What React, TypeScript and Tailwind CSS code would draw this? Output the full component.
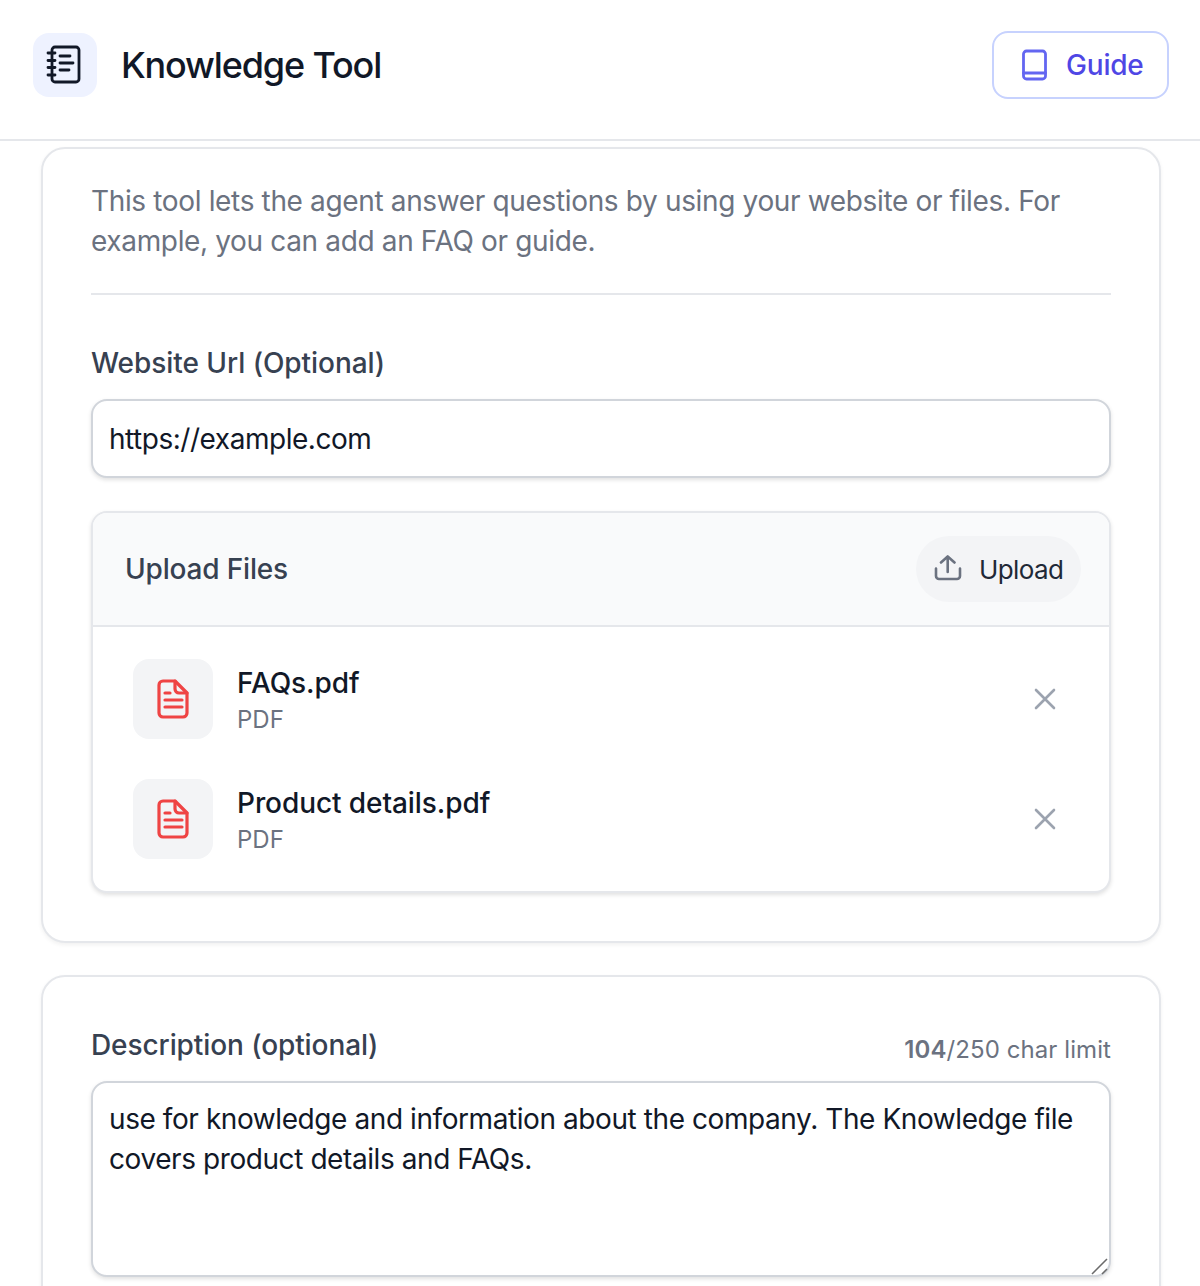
import React from "react";

function NotebookIcon() {
  return (
    <svg width="40" height="40" viewBox="0 0 40 40" fill="none" stroke="#111827" strokeWidth="2.8" strokeLinecap="round" strokeLinejoin="round">
      <rect x="7" y="2" width="27" height="35" rx="3" />
      <path d="M3 8h7M3 15.5h7M3 22.5h7M3 30h7" />
      <path d="M15 11h10M15 18h13M15 25h9" />
    </svg>
  );
}

function BookIcon() {
  return (
    <svg width="32" height="36" viewBox="0 0 32 36" fill="none" stroke="#6366f1" strokeWidth="2.8" strokeLinecap="round" strokeLinejoin="round">
      <rect x="4.5" y="4" width="22" height="28" rx="3" />
      <path d="M4.5 26h22" />
    </svg>
  );
}

function FileIcon() {
  return (
    <svg width="36" height="42" viewBox="0 0 36 42" fill="none" stroke="#ef4444" strokeWidth="3.2" strokeLinecap="round" strokeLinejoin="round">
      <path d="M20 3H8a4 4 0 0 0-4 4v28a4 4 0 0 0 4 4h20a4 4 0 0 0 4-4V15L20 3Z" />
      <path d="M20 3v8a4 4 0 0 0 4 4h8" />
      <path d="M10 15h5M10 22h17M10 29h17" />
    </svg>
  );
}

function UploadIcon() {
  return (
    <svg width="28" height="28" viewBox="0 0 28 28" fill="none" stroke="#6b7280" strokeWidth="2.6" strokeLinecap="round" strokeLinejoin="round">
      <path d="M13.7 1.5V17M7 7.5l6.7-6L20.5 7.5" />
      <path d="M2 13.5V21a3 3 0 0 0 3 3h18a3 3 0 0 0 3-3v-7.5" />
    </svg>
  );
}

function CloseIcon() {
  return (
    <svg width="24" height="24" viewBox="0 0 24 24" fill="none" stroke="#9ca3af" strokeWidth="2.6" strokeLinecap="round">
      <path d="M3 3l18 18M21 3L3 21" />
    </svg>
  );
}

function FileRow({ name }: { name: string }) {
  return (
    <div className="flex h-[80px] items-center">
      <div className="flex h-[80px] w-[80px] items-center justify-center rounded-[16px] bg-[#f3f4f6]">
        <FileIcon />
      </div>
      <div className="ml-[24px] flex-1">
        <div className="text-[28px] leading-[40px] font-medium tracking-[-0.08px] text-[#111827]">{name}</div>
        <div className="mt-[1px] text-[24px] leading-[32px] text-[#6b7280]">PDF</div>
      </div>
      <div className="mr-[4px] flex h-[40px] w-[40px] items-center justify-center">
        <CloseIcon />
      </div>
    </div>
  );
}

export default function App() {
  return (
    <div className="h-[1286px] w-[1200px] overflow-hidden bg-white font-['Inter',sans-serif]">
      <header className="flex h-[141px] items-center justify-between border-b-2 border-[#e5e7eb] pr-[31px] pb-[9px] pl-[33px]">
        <div className="flex items-center gap-[24px]">
          <div className="flex h-[64px] w-[64px] items-center justify-center rounded-[16px] bg-[#eef2ff]">
            <NotebookIcon />
          </div>
          <h1 className="text-[36px] leading-[40px] font-medium tracking-[-1.15px] text-[#111827]">Knowledge Tool</h1>
        </div>
        <button className="flex h-[68px] w-[177px] items-center justify-start gap-[15px] rounded-[16px] border-2 border-[#c7d2fe] bg-white pl-[25px] text-[28px] font-medium tracking-[-0.2px] text-[#4f46e5]">
          <BookIcon />
          Guide
        </button>
      </header>

      <main className="mt-[6px] flex flex-col gap-[32px] pr-[39px] pl-[41px]">
        <section className="rounded-[24px] border-2 border-[#e5e7eb] bg-white px-[48px] pt-[32px] pb-[48px] shadow-[0_2px_4px_rgba(0,0,0,0.06)]">
          <p className="border-b-2 border-[#e5e7eb] pb-[32px] text-[28px] leading-[40px] tracking-[-0.35px] text-[#6b7280]">
            This tool lets the agent answer questions by using your website or files. For example, you can add an FAQ or guide.
          </p>

          <label className="mt-[48px] block text-[28px] leading-[40px] font-medium tracking-[-0.05px] text-[#374151]">Website Url (Optional)</label>
          <input
            readOnly
            value="https://example.com"
            className="mt-[16px] block h-[79px] w-full rounded-[16px] border-2 border-[#d1d5db] bg-white px-[16px] text-[28px] tracking-[-0.47px] text-[#111827] shadow-[0_2px_4px_rgba(0,0,0,0.12)] outline-none"
          />

          <div className="mt-[33px] overflow-hidden rounded-[16px] border-2 border-[#e5e7eb] bg-white shadow-[0_2px_4px_rgba(0,0,0,0.12)]">
            <div className="flex h-[114px] items-center justify-between border-b-2 border-[#e5e7eb] bg-[#f9fafb] pr-[28px] pl-[32px]">
              <h2 className="text-[28px] leading-[40px] font-medium tracking-[-0.18px] text-[#374151]">Upload Files</h2>
              <button className="flex h-[66px] w-[165px] items-center justify-start gap-[17px] rounded-full bg-[#f3f4f6] pl-[18px] text-[26px] tracking-[-0.6px] text-[#1f2937]">
                <UploadIcon />
                Upload
              </button>
            </div>
            <div className="flex flex-col gap-[40px] px-[40px] pt-[32px] pb-[32px]">
              <FileRow name="FAQs.pdf" />
              <FileRow name="Product details.pdf" />
            </div>
          </div>
        </section>

        <section className="rounded-[24px] border-2 border-[#e5e7eb] bg-white px-[48px] pt-[48px] pb-[48px] shadow-[0_2px_4px_rgba(0,0,0,0.06)]">
          <div className="flex items-end justify-between">
            <label className="text-[28px] leading-[40px] font-medium tracking-[-0.09px] text-[#374151]">Description (optional)</label>
            <div className="translate-y-[1px] text-[24px] leading-[32px] tracking-[0.08px] text-[#6b7280]">
              <span className="font-semibold">104</span>/250 char limit
            </div>
          </div>
          <div className="relative mt-[16px]">
            <textarea
              readOnly
              value="use for knowledge and information about the company. The Knowledge file covers product details and FAQs."
              className="block h-[196px] w-full resize-none rounded-[16px] border-2 border-[#d1d5db] bg-white px-[16px] py-[16px] text-[28px] leading-[40px] tracking-[-0.42px] text-[#111827] shadow-[0_2px_4px_rgba(0,0,0,0.12)] outline-none"
            />
            <svg className="absolute right-[2px] bottom-[2px]" width="18" height="18" viewBox="0 0 18 18" fill="none" stroke="#6b6b6b" strokeWidth="1.5">
              <path d="M1 17L16 2M11 17l5-5" />
            </svg>
          </div>
        </section>
      </main>
    </div>
  );
}
